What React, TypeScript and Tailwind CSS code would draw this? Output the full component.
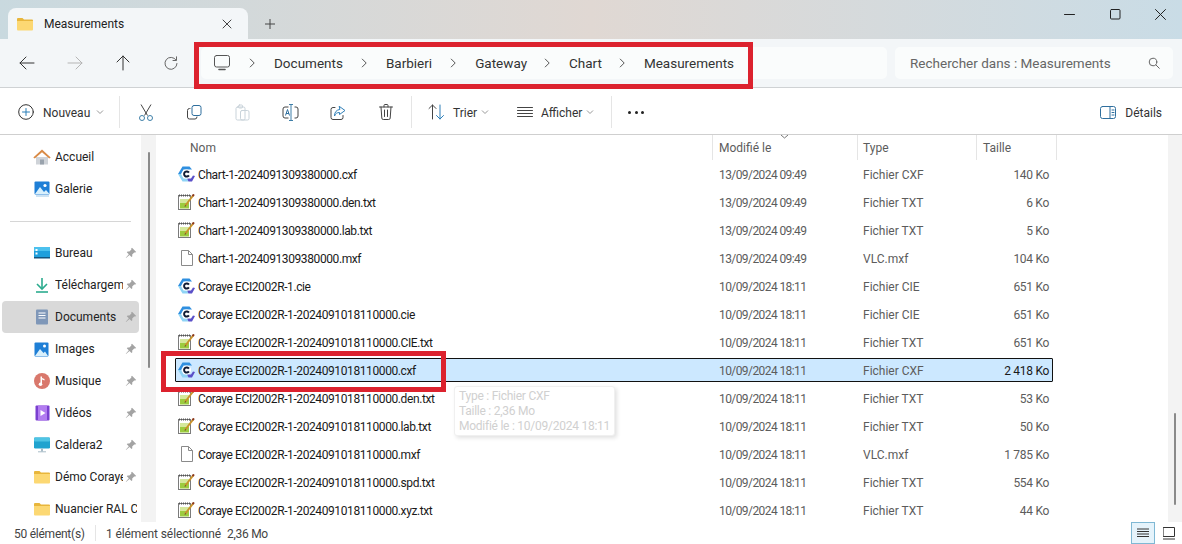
import React from "react";

const S = ({ w = 16, h = 16, vb = "0 0 16 16", children, c = "#444", sw = 1 }: any) => (
  <svg width={w} height={h} viewBox={vb} fill="none" stroke={c} strokeWidth={sw} strokeLinecap="round" strokeLinejoin="round" className="shrink-0">{children}</svg>
);

const Folder = () => (
  <svg width="16" height="14" viewBox="0 0 16 14" className="shrink-0">
    <path d="M0 2a1 1 0 0 1 1-1h4.500l1.500 1.600H15a1 1 0 0 1 1 1V5H0z" fill="#e8b63c" />
    <path d="M0 4h16v8.500a1 1 0 0 1-1 1H1a1 1 0 0 1-1-1z" fill="#fcd873" />
  </svg>
);

const Coraye = () => (
  <svg width="17" height="16" viewBox="0 0 17 16" className="shrink-0">
    <path d="M4.500 .5H11.500L14 3.500H5.500L3 8H0z" fill="#2f8fe0" />
    <path d="M0 8H3L5.500 12.500H9L10.500 15.500H4.500z" fill="#8fd4f5" />
    <path d="M10.500 15.500L9 12.500H13L15 9.500L17 10L14 15.500z" fill="#5a50c8" />
    <circle cx="8.500" cy="8" r="4.600" fill="#fff" />
    <path d="M10.900 6.600A2.600 2.600 0 1 0 10.900 9.400" fill="none" stroke="#0f1a33" strokeWidth="2" />
  </svg>
);

const Txt = () => (
  <svg width="17" height="16" viewBox="0 0 17 16" className="shrink-0">
    <rect x="0.500" y="1.500" width="12" height="14" fill="#fff" stroke="#7b7b7b" />
    <path d="M1 1.500h11" stroke="#555" strokeDasharray="1 1" strokeWidth="2" />
    <rect x="2" y="5" width="9" height="9.500" fill="#9ccb3f" />
    <rect x="2" y="5" width="9" height="4" fill="#d5e89b" />
    <path d="M7 12L15.500 1" stroke="#c9932b" strokeWidth="2" />
    <path d="M14.500 2.200L16 .4" stroke="#8c3a20" strokeWidth="2" />
    <path d="M6.500 12.800l.7-1.500 1 .8z" fill="#333" />
  </svg>
);

const Blank = () => (
  <svg width="16" height="16" viewBox="0 0 16 16" fill="none" className="shrink-0">
    <path d="M2.500 .5h7l4 4v11h-11z" fill="#fff" stroke="#8a8a8a" />
    <path d="M9.500 .5v4h4" stroke="#8a8a8a" />
  </svg>
);

const Pin = () => (
  <svg width="12" height="12" viewBox="0 0 12 12" className="shrink-0">
    <path d="M7 .8l4.200 4.200-1 .6-1-.2-2 2 .1 1.800-.8.8-2-2L1 11l-.2-.2 3-3.600-2-2 .8-.8 1.800.1 2-2-.2-1z" fill="#a3a3a3" />
  </svg>
);

const Chev = () => (
  <svg width="8" height="8" viewBox="0 0 8 8" fill="none" stroke="#999" strokeWidth="1" className="shrink-0"><path d="M1 2.500l3 3 3-3" /></svg>
);

const Crumb = () => (
  <svg width="7" height="10" viewBox="0 0 7 10" fill="none" stroke="#555" strokeWidth="1" className="shrink-0"><path d="M1 .8l4.200 4.200L1 9.200" /></svg>
);

const files: [string, string, string, string, string, string][] = [
  ["c", "Chart-1-2024091309380000.cxf", "13/09/2024 09:49", "Fichier CXF", "140 Ko", ""],
  ["t", "Chart-1-2024091309380000.den.txt", "13/09/2024 09:49", "Fichier TXT", "6 Ko", ""],
  ["t", "Chart-1-2024091309380000.lab.txt", "13/09/2024 09:49", "Fichier TXT", "5 Ko", ""],
  ["b", "Chart-1-2024091309380000.mxf", "13/09/2024 09:49", "VLC.mxf", "104 Ko", ""],
  ["c", "Coraye ECI2002R-1.cie", "10/09/2024 18:11", "Fichier CIE", "651 Ko", ""],
  ["c", "Coraye ECI2002R-1-2024091018110000.cie", "10/09/2024 18:11", "Fichier CIE", "651 Ko", ""],
  ["t", "Coraye ECI2002R-1-2024091018110000.CIE.txt", "10/09/2024 18:11", "Fichier TXT", "651 Ko", ""],
  ["c", "Coraye ECI2002R-1-2024091018110000.cxf", "10/09/2024 18:11", "Fichier CXF", "2 418 Ko", "s"],
  ["t", "Coraye ECI2002R-1-2024091018110000.den.txt", "10/09/2024 18:11", "Fichier TXT", "53 Ko", ""],
  ["t", "Coraye ECI2002R-1-2024091018110000.lab.txt", "10/09/2024 18:11", "Fichier TXT", "50 Ko", ""],
  ["b", "Coraye ECI2002R-1-2024091018110000.mxf", "10/09/2024 18:11", "VLC.mxf", "1 785 Ko", ""],
  ["t", "Coraye ECI2002R-1-2024091018110000.spd.txt", "10/09/2024 18:11", "Fichier TXT", "554 Ko", ""],
  ["t", "Coraye ECI2002R-1-2024091018110000.xyz.txt", "10/09/2024 18:11", "Fichier TXT", "44 Ko", ""],
];

const sideIcons: Record<string, React.ReactNode> = {
  Accueil: (
    <svg width="18" height="16" viewBox="0 0 18 16"><path d="M3 8h12v7.500H3z" fill="#cfd3d8" /><path d="M7 10.500h4v5H7z" fill="#9aa3ad" /><path d="M9 .5L.3 8.500l1.500 1L9 3.200l7.200 6.300 1.500-1z" fill="#d98a45" /></svg>
  ),
  Galerie: (
    <svg width="17" height="16" viewBox="0 0 17 16"><rect x="0.500" y="0.500" width="15" height="13" rx="1" fill="#1f7fd6" /><circle cx="11" cy="4.500" r="1.600" fill="#fff" /><path d="M1 13L6 6l4 5 2-2 3.500 4z" fill="#d9f0fc" /><path d="M2 14.500h13v1H2z" fill="#9ac7e6" /></svg>
  ),
  Bureau: (
    <svg width="17" height="14" viewBox="0 0 17 14"><rect x="0" y="1" width="16" height="11" rx="1" fill="#1f9fdc" /><rect x="0" y="1" width="16" height="4" fill="#4cc1ee" /><rect x="1.500" y="3" width="2" height="2" fill="#fff" /><rect x="1.500" y="6.500" width="2" height="2" fill="#fff" /><rect x="0" y="11" width="16" height="1.500" fill="#13557f" /></svg>
  ),
  "Téléchargem": (
    <svg width="16" height="16" viewBox="0 0 16 16" fill="none" stroke="#2bab8e" strokeWidth="1.600"><path d="M8 1v10" /><path d="M3 7l5 5 5-5" /><path d="M2 15h12" /></svg>
  ),
  Documents: (
    <svg width="14" height="16" viewBox="0 0 14 16"><rect x="1" y="0.500" width="12" height="15" rx="1" fill="#7f97b8" /><rect x="3.500" y="3.500" width="7" height="1" fill="#fff" /><rect x="3.500" y="6" width="7" height="1" fill="#fff" /><rect x="3.500" y="8.500" width="7" height="1" fill="#fff" /></svg>
  ),
  Images: (
    <svg width="16" height="15" viewBox="0 0 16 15"><rect x="0.500" y="0.500" width="14" height="14" rx="1" fill="#1f7fd6" /><circle cx="10.500" cy="4" r="1.500" fill="#fff" /><path d="M1 14l5-7 3.500 4 1.500-1.500L14 14z" fill="#d9f0fc" /></svg>
  ),
  Musique: (
    <svg width="16" height="16" viewBox="0 0 16 16"><circle cx="8" cy="8" r="8" fill="#d9786c" /><path d="M6.500 11V3.500h1.500v1.500L10.500 6v1.500L8 6.500V11z" fill="#fff" /><circle cx="6.500" cy="11.300" r="1.800" fill="#fff" /></svg>
  ),
  "Vidéos": (
    <svg width="15" height="16" viewBox="0 0 15 16"><rect x="0.500" y="0.500" width="14" height="15" rx="1" fill="#7a3fd0" /><rect x="3" y="0.500" width="9" height="15" fill="#b27cf0" /><path d="M5.500 5l5 3-5 3z" fill="#fff" /></svg>
  ),
  Caldera2: (
    <svg width="16" height="16" viewBox="0 0 16 16"><rect x="0" y="0.500" width="16" height="11" rx="1.200" fill="#20a3cf" /><rect x="0" y="0.500" width="16" height="4" rx="1" fill="#4fc4e4" /><rect x="7" y="11.500" width="2" height="3" fill="#a8bcc8" /><rect x="4" y="14.300" width="8" height="1" fill="#a8bcc8" /></svg>
  ),
};

const side = [
  ["Accueil", false], ["Galerie", false], null,
  ["Bureau", true], ["Téléchargem", true], ["Documents", true], ["Images", true], ["Musique", true], ["Vidéos", true], ["Caldera2", true], ["Démo Coraye", true], ["Nuancier RAL C", false],
] as const;

const NavBtn = ({ children }: any) => <div className="w-[48px] h-[32px] flex items-center justify-center shrink-0">{children}</div>;

const ToolIcon = ({ children }: any) => <div className="w-[48px] flex items-center justify-center shrink-0">{children}</div>;

export default function App() {
  return (
    <div className="w-[1182px] h-[544px] overflow-hidden relative flex flex-col bg-white text-[12px] text-[#1a1a1a]" style={{ fontFamily: "Roboto, 'Noto Sans', sans-serif" }}>
      {/* Title bar */}
      <div className="h-[39px] shrink-0 flex items-end pl-[8px] bg-gradient-to-r from-[#c9d9df] via-[#e0d8d3] to-[#c9dce6]">
        <div className="w-[240px] h-[31px] bg-[#f3f6f8] rounded-t-[8px] flex items-center pl-[9px] pr-[16px] gap-[11px]">
          <Folder />
          <span className="text-[12px] text-[#222] flex-1">Measurements</span>
          <S w={10} h={10} vb="0 0 10 10"><path d="M1 1l8 8M9 1l-8 8" /></S>
        </div>
        <div className="w-[44px] h-[31px] flex items-center justify-center">
          <S w={10} h={10} vb="0 0 10 10"><path d="M5 0v10M0 5h10" /></S>
        </div>
        <div className="flex-1" />
        <div className="h-[30px] flex items-start text-[#222]">
          <div className="w-[46px] flex justify-center"><S w={11} h={11} vb="0 0 11 11" c="#222"><path d="M.5 5.500h10" /></S></div>
          <div className="w-[46px] flex justify-center"><S w={11} h={11} vb="0 0 11 11" c="#222"><rect x=".5" y=".5" width="9.500" height="9.500" rx="1" /></S></div>
          <div className="w-[44px] flex justify-center"><S w={11} h={11} vb="0 0 11 11" c="#222"><path d="M.5.500l10 10M10.500.500l-10 10" /></S></div>
        </div>
      </div>

      {/* Address row */}
      <div className="h-[49px] shrink-0 bg-[#f3f6f8] border-b border-[#cfd2d4] flex items-center pl-[3px] pr-[9px]">
        <NavBtn><S w={16} h={14} vb="0 0 16 14" c="#333"><path d="M1 7h14M7 1L1 7l6 6" /></S></NavBtn>
        <NavBtn><S w={16} h={14} vb="0 0 16 14" c="#b5b5b5"><path d="M1 7h14M9 1l6 6-6 6" /></S></NavBtn>
        <NavBtn><S w={14} h={16} vb="0 0 14 16" c="#333"><path d="M7 15V1M1 7l6-6 6 6" /></S></NavBtn>
        <NavBtn><S w={14} h={14} vb="0 0 14 14" c="#666"><path d="M12 4A6 6 0 1 0 13 7.500" /><path d="M12.500 .8V4.500H9" /></S></NavBtn>
        <div className="w-[686px] h-[32px] ml-[6px] bg-[#fafcfc] rounded-[5px] flex items-center pl-[13px] text-[13.5px] text-[#333] shrink-0">
          <S w={17} h={16} vb="0 0 17 16" c="#555"><rect x=".5" y=".5" width="15" height="11.500" rx="2" /><path d="M5 14.500h6" strokeWidth="1.600" /></S>
          <span className="w-[18px]" />
          <Crumb />
          <span className="ml-[18px]">Documents</span>
          <span className="ml-[18px]"><Crumb /></span>
          <span className="ml-[18px]">Barbieri</span>
          <span className="ml-[18px]"><Crumb /></span>
          <span className="ml-[18px]">Gateway</span>
          <span className="ml-[17px]"><Crumb /></span>
          <span className="ml-[18px]">Chart</span>
          <span className="ml-[17px]"><Crumb /></span>
          <span className="ml-[18px]">Measurements</span>
        </div>
        <div className="w-[278px] h-[32px] ml-[8px] bg-[#fafcfc] rounded-[5px] flex items-center pl-[15px] pr-[13px] text-[13.5px] text-[#666] shrink-0">
          <span className="flex-1">Rechercher dans : Measurements</span>
          <S w={12} h={12} vb="0 0 12 12" c="#666"><circle cx="5" cy="5" r="3.800" /><path d="M8 8l3.300 3.300" /></S>
        </div>
      </div>

      {/* Toolbar */}
      <div className="h-[47px] shrink-0 bg-white border-b border-[#cfcfcf] flex items-center pt-[2px] text-[#333]">
        <div className="w-[18px]" />
        <S w={16} h={16} vb="0 0 16 16" c="#333"><circle cx="8" cy="8" r="7.300" /><path d="M8 4.500v7M4.500 8h7" stroke="#2a7fb8" /></S>
        <span className="ml-[9px] w-[53px] pt-[1px]">Nouveau</span>
        <Chev />
        <div className="w-[15px]" />
        <div className="w-px h-[32px] bg-[#e5e5e5]" />
        <div className="w-[2px]" />
        <ToolIcon><svg width="16" height="17" viewBox="0 0 16 17" fill="none" stroke="#3f7fa8" strokeWidth="1"><path d="M3 .5l6.500 11M13 .5L6.500 11.500" stroke="#444" /><circle cx="4" cy="14" r="2.500" /><circle cx="12" cy="14" r="2.500" /></svg></ToolIcon>
        <ToolIcon><S w={15} h={15} vb="0 0 15 15" c="#2f6f9e"><rect x="5" y=".5" width="9" height="10" rx="2" /><path d="M3 3.500H2.500a2 2 0 0 0-2 2v6.500a2 2 0 0 0 2 2H8a2 2 0 0 0 2-2" stroke="#444" /></S></ToolIcon>
        <ToolIcon><S w={15} h={17} vb="0 0 15 17" c="#c9d3da"><rect x="1" y="3" width="9" height="13" rx="1.500" /><rect x="5.500" y="6.500" width="8.500" height="9.500" rx="1.500" /><rect x="3.500" y="1" width="4" height="3" rx="1" /></S></ToolIcon>
        <ToolIcon><svg width="17" height="17" viewBox="0 0 17 17" fill="none" stroke="#444" strokeWidth="1"><path d="M6.500 3H3a2 2 0 0 0-2 2v7a2 2 0 0 0 2 2h3.500M12.500 3H14a2 2 0 0 1 2 2v7a2 2 0 0 1-2 2h-1.500" /><path d="M7 .5h4M7 16.500h4M9 .5v16" stroke="#3f7fa8" /><path d="M3.500 11.500L5.500 5.500l2 6M4 9.500h3" stroke="#2f6f9e" /></svg></ToolIcon>
        <ToolIcon><S w={16} h={15} vb="0 0 16 15" c="#444"><path d="M5 2.500H3a2 2 0 0 0-2 2v8a2 2 0 0 0 2 2h8a2 2 0 0 0 2-2v-2" /><path d="M9.500 1.500L15 5.500l-5.500 4V7.500C7 7.500 5.500 8.500 4.500 11c0-4 2-6 5-6.500z" stroke="#2f7fb8" /></S></ToolIcon>
        <ToolIcon><S w={14} h={16} vb="0 0 14 16" c="#444"><path d="M.5 3h13M5 3V1.500a1 1 0 0 1 1-1h2a1 1 0 0 1 1 1V3M2 3l.8 11a1.500 1.500 0 0 0 1.500 1.500h5.400a1.500 1.500 0 0 0 1.500-1.500L12 3M5.500 6v6.500M8.500 6v6.500" /></S></ToolIcon>
        <div className="w-[1px]" />
        <div className="w-px h-[32px] bg-[#e5e5e5]" />
        <div className="w-[16px]" />
        <S w={17} h={16} vb="0 0 17 16" c="#444"><path d="M4.500 15V1M1 4.500L4.500 1 8 4.500" /><path d="M12 1v14M8.500 11.500L12 15l3.500-3.500" stroke="#2f7fb8" /></S>
        <span className="ml-[8px] w-[28px] pt-[1px]">Trier</span>
        <Chev />
        <div className="w-[28px]" />
        <S w={16} h={11} vb="0 0 16 11" c="#444"><path d="M.5.500h15M.5 3.500h15M.5 6.500h15M.5 9.500h15" /></S>
        <span className="ml-[8px] w-[45px] pt-[1px]">Afficher</span>
        <Chev />
        <div className="w-[17px]" />
        <div className="w-px h-[32px] bg-[#e5e5e5]" />
        <div className="w-[16px]" />
        <div className="flex gap-[3.500px]">
          <span className="w-[3px] h-[3px] rounded-full bg-[#222]" />
          <span className="w-[3px] h-[3px] rounded-full bg-[#222]" />
          <span className="w-[3px] h-[3px] rounded-full bg-[#222]" />
        </div>
        <div className="flex-1" />
        <S w={16} h={13} vb="0 0 16 13" c="#2f6f9e"><rect x=".5" y=".5" width="15" height="12" rx="2" /><path d="M10 .5v12" /><path d="M12 4h2M12 6.500h2M12 9h2" /></S>
        <span className="ml-[9px] mr-[20px] pt-[1px]">Détails</span>
      </div>

      {/* Content */}
      <div className="flex-1 min-h-0 flex">
        {/* Sidebar */}
        <div className="w-[141px] shrink-0 pt-[6px] pl-[2px] pr-[2px] overflow-hidden">
          {side.map((it, i) =>
            it === null ? (
              <div key={i} className="h-[32px] flex items-center pl-[8px] pr-[8px]"><div className="h-px w-full bg-[#d6d6d6]" /></div>
            ) : (
              <div key={i} className={`h-[32px] flex items-center rounded-[4px] relative ${it[0] === "Documents" ? "bg-[#d9d9d9]" : ""}`}>
                <div className="w-[31px] shrink-0" />
                <div className="w-[18px] h-[16px] shrink-0 flex items-center justify-center">{sideIcons[it[0]] ?? <Folder />}</div>
                <span className={`ml-[4px] overflow-hidden whitespace-nowrap text-[#222] ${it[1] ? "w-[68px]" : "w-[82px]"}`}>{it[0]}</span>
                {it[1] && <div className="ml-[2px]"><Pin /></div>}
              </div>
            )
          )}
        </div>
        {/* Sidebar scrollbar */}
        <div className="w-[15px] shrink-0 bg-[#f3f3f3] flex justify-center pt-[17px]">
          <div className="w-[2px] h-[216px] rounded-full bg-[#8a8a8a]" />
        </div>

        {/* List */}
        <div className="flex-1 min-w-0 flex flex-col">
          <div className="h-[25px] shrink-0 flex items-center pl-[19px] text-[#5c5c5c] relative">
            <div className="w-[537px] pl-[15px]">Nom</div>
            <div className="w-[145px] h-full flex items-center border-l border-[#e5e5e5] pl-[6px]">Modifié le</div>
            <div className="w-[119px] h-full flex items-center border-l border-[#e5e5e5] pl-[5px]">Type</div>
            <div className="w-[81px] h-full flex items-center border-x border-[#e5e5e5] pl-[6px]">Taille</div>
            <svg width="9" height="5" viewBox="0 0 9 5" fill="none" stroke="#777" className="absolute left-[624px] top-[-1px]"><path d="M1 1l3.500 3L8 1" /></svg>
          </div>
          <div className="flex-1 min-h-0 flex flex-col pt-[2px] gap-[4px] pl-[19px] overflow-hidden">
            {files.map((f, i) => (
              <div key={i} className={`w-[878px] h-[24px] shrink-0 flex items-center pl-[2px] pr-[3px] rounded-[1px] border ${f[5] ? "bg-[#cce8ff] border-[#111]" : "border-transparent"}`}>
                <div className="w-[17px] shrink-0 flex justify-center">{f[0] === "c" ? <Coraye /> : f[0] === "t" ? <Txt /> : <Blank />}</div>
                <div className="ml-[3px] w-[521px] pt-[1px] whitespace-nowrap tracking-[-0.4px] text-[#1a1a1a]">{f[1]}</div>
                <div className="w-[144px] pt-[1px] tracking-[-0.58px] text-[#5c5c5c]">{f[2]}</div>
                <div className="w-[108px] pt-[1px] text-[#5c5c5c]">{f[3]}</div>
                <div className={`flex-1 pt-[1px] text-right tracking-[-0.3px] ${f[5] ? "text-[#1a1a1a]" : "text-[#5c5c5c]"}`}>{f[4]}</div>
              </div>
            ))}
          </div>
        </div>

        {/* Right scrollbar */}
        <div className="w-[14px] shrink-0 bg-[#f3f3f3] flex justify-center pt-[278px]">
          <div className="w-[2px] h-[92px] rounded-full bg-[#8a8a8a]" />
        </div>
      </div>

      {/* Status bar */}
      <div className="h-[22px] shrink-0 flex items-center pl-[14px] text-[#444]">
        <span className="w-[81px] pt-[1px] tracking-[-0.25px]">50 élément(s)</span>
        <div className="w-px h-[16px] bg-[#e5e5e5]" />
        <span className="ml-[10px] pt-[1px] tracking-[-0.1px]">1 élément sélectionné</span>
        <span className="ml-[6px] pt-[1px] tracking-[-0.3px]">2,36 Mo</span>
        <div className="flex-1" />
        <div className="w-[24px] h-[22px] bg-[#e5f3fb] border border-[#7fb8d4] flex items-center justify-center">
          <S w={12} h={11} vb="0 0 12 11" c="#333"><path d="M0 1h12M0 3.500h12M0 6h12M0 8.500h12" /></S>
        </div>
        <div className="w-[27px] flex justify-center">
          <S w={12} h={13} vb="0 0 12 13" c="#333"><rect x=".5" y=".5" width="11" height="9" /><path d="M0 12h12" /></S>
        </div>
      </div>

      {/* Tooltip */}
      <div className="absolute left-[454px] top-[386px] w-[161px] h-[50px] bg-white border border-[#f0f0f0] rounded-[3px] shadow-[2px_2px_4px_rgba(0,0,0,0.12)] pl-[4px] pt-[2px] text-[12px] leading-[15px] text-[#d0d0d0] whitespace-nowrap tracking-[-0.25px]">
        <div>Type : Fichier CXF</div>
        <div>Taille : 2,36 Mo</div>
        <div>Modifié le : 10/09/2024 18:11</div>
      </div>

      {/* Annotation rectangles */}
      <div className="absolute left-[194px] top-[42px] w-[559px] h-[47px] border-[5px] border-[#dc222e]" />
      <div className="absolute left-[161px] top-[351px] w-[285px] h-[41px] border-[5px] border-[#dc222e]" />
    </div>
  );
}
